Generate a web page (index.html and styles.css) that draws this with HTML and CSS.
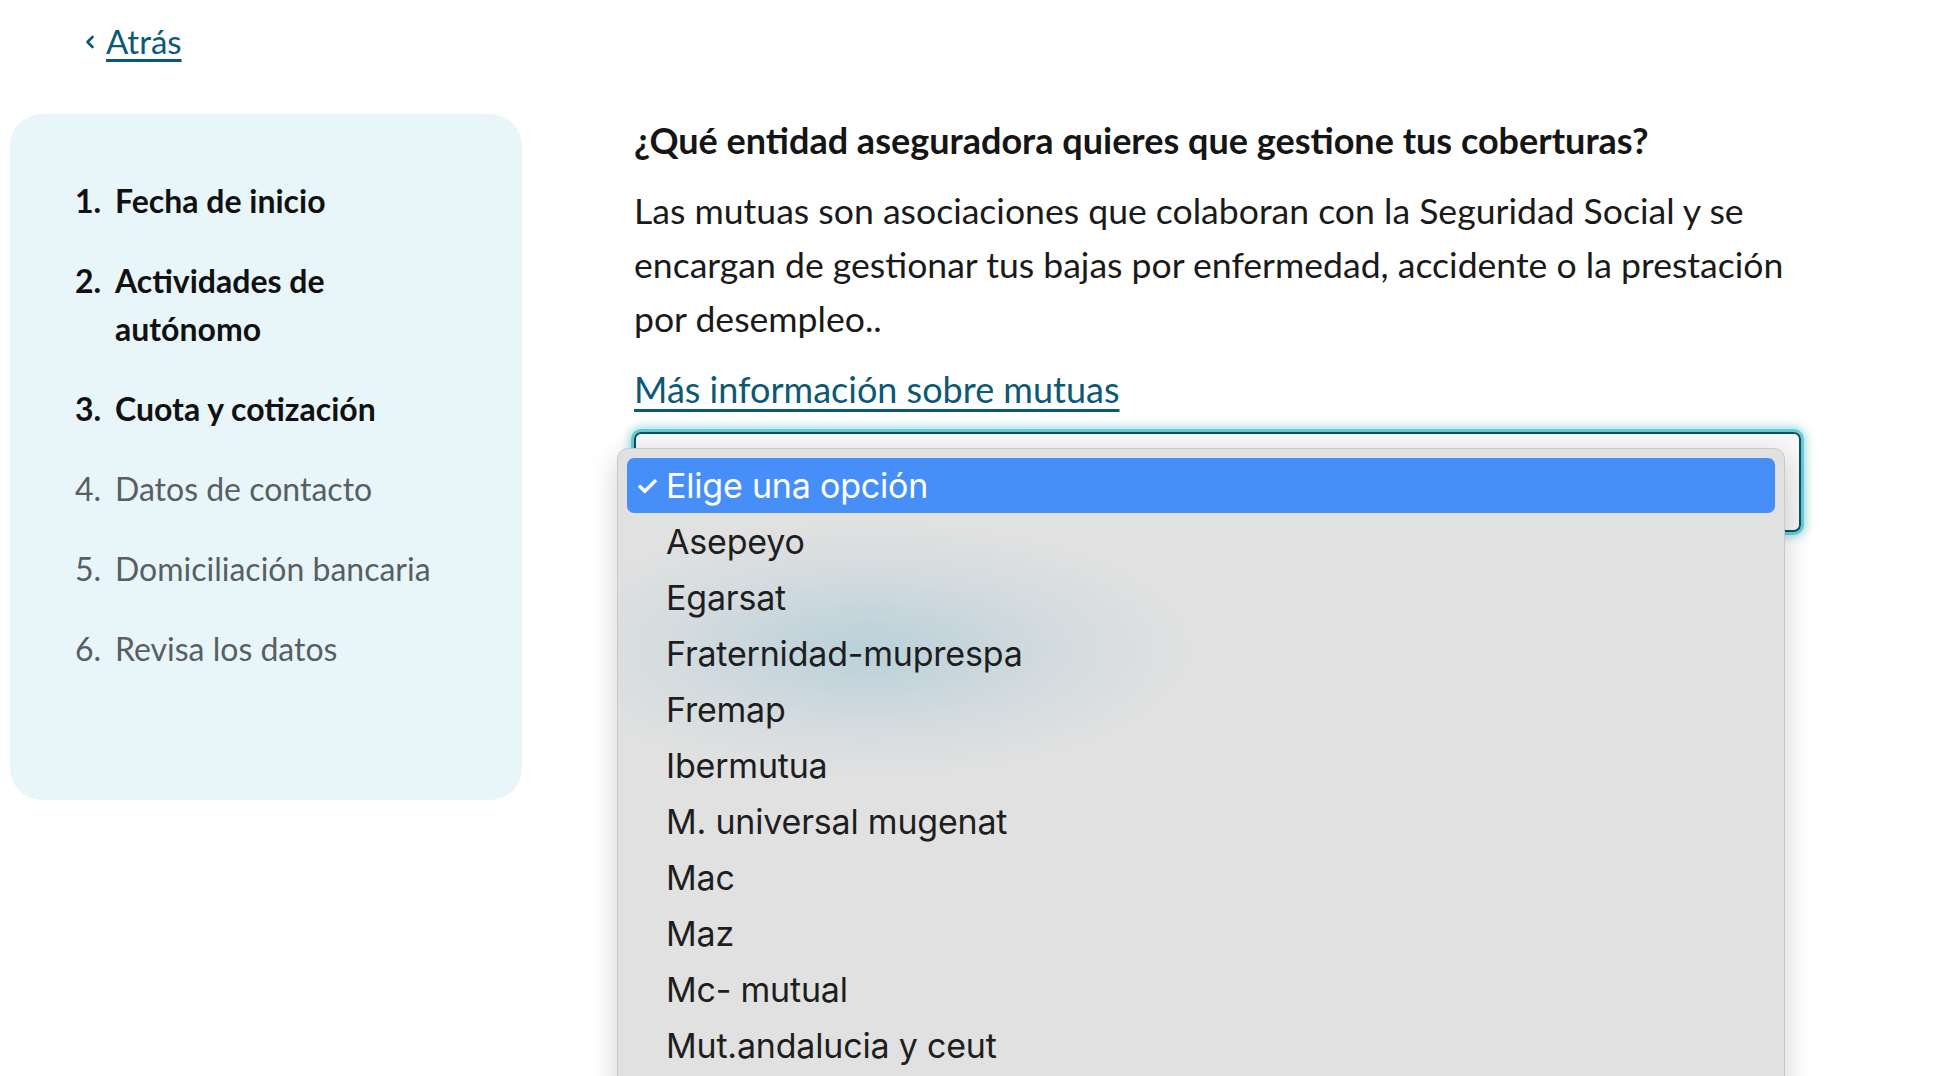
FILE: index.html
```html
<!DOCTYPE html>
<html lang="es">
<head>
<meta charset="utf-8">
<title>Entidad aseguradora</title>
<link rel="stylesheet" href="styles.css">
</head>
<body>
<div class="page">
  <nav class="back-row">
    <a class="back" href="#"><svg class="chev" width="12" height="16" viewBox="0 0 12 16" aria-hidden="true"><polyline points="8.5,3 3.5,8 8.5,13" fill="none" stroke="#0b5a75" stroke-width="2.6" stroke-linecap="round" stroke-linejoin="round"/></svg><span class="back-text">Atrás</span></a>
  </nav>
  <div class="layout">
    <aside class="sidebar">
      <ol class="steps">
        <li class="step done"><span class="num">1.</span><span class="label">Fecha de inicio</span></li>
        <li class="step done"><span class="num">2.</span><span class="label">Actividades de<br>autónomo</span></li>
        <li class="step done"><span class="num">3.</span><span class="label">Cuota y cotización</span></li>
        <li class="step"><span class="num">4.</span><span class="label">Datos de contacto</span></li>
        <li class="step"><span class="num">5.</span><span class="label">Domiciliación bancaria</span></li>
        <li class="step"><span class="num">6.</span><span class="label">Revisa los datos</span></li>
      </ol>
    </aside>
    <main class="main">
      <h1 class="question">¿Qué entidad aseguradora quieres que gestione tus coberturas?</h1>
      <p class="desc">Las mutuas son asociaciones que colaboran con la Seguridad Social y se encargan de gestionar tus bajas por enfermedad, accidente o la prestación por desempleo..</p>
      <a class="more" href="#">Más información sobre mutuas</a>
      <div class="select-wrap">
        <div class="select-box"></div>
        <div class="popup">
          <div class="blob"></div>
          <ul class="options">
            <li class="opt selected"><span class="check">✓</span>Elige una opción</li>
            <li class="opt">Asepeyo</li>
            <li class="opt">Egarsat</li>
            <li class="opt">Fraternidad-muprespa</li>
            <li class="opt">Fremap</li>
            <li class="opt">Ibermutua</li>
            <li class="opt">M. universal mugenat</li>
            <li class="opt">Mac</li>
            <li class="opt">Maz</li>
            <li class="opt">Mc- mutual</li>
            <li class="opt">Mut.andalucia y ceut</li>
          </ul>
        </div>
      </div>
    </main>
  </div>
</div>
</body>
</html>
```

FILE: styles.css
```css
html, body {
  margin: 0;
  padding: 0;
  height: 100%;
  overflow: hidden;
  background: #ffffff;
}
body {
  font-family: Lato, "Noto Sans", sans-serif;
  color: #151515;
}
.page {
  padding: 0 0 0 10px;
}
.back-row {
  height: 114px;
  padding-left: 74px;
  box-sizing: border-box;
  padding-top: 20px;
}
.back {
  display: inline-flex;
  align-items: center;
  color: #0b5a75;
  text-decoration: none;
  font-size: 33px;
  line-height: 42px;
}
.chev {
  margin-right: 10px;
  position: relative;
  top: 1px;
}
.back-text {
  text-decoration: underline;
  text-decoration-thickness: 3px;
  text-underline-offset: 5px;
}
.layout {
  display: flex;
  align-items: flex-start;
}
.sidebar {
  width: 512px;
  height: 686px;
  box-sizing: border-box;
  background: #e8f6fa;
  border-radius: 32px;
  padding: 63px 20px 0 65px;
  flex-shrink: 0;
}
.steps {
  list-style: none;
  margin: 0;
  padding: 0;
  display: flex;
  flex-direction: column;
  gap: 32px;
}
.step {
  display: flex;
  font-size: 32px;
  line-height: 48px;
  color: #595e62;
}
.step.done {
  font-weight: 700;
  color: #111111;
}
.num {
  width: 40px;
  flex-shrink: 0;
}
.main {
  margin-left: 112px;
  width: 1170px;
  padding-top: 6px;
}
.question {
  margin: 0;
  font-size: 36px;
  font-weight: 700;
  line-height: 40px;
  color: #151515;
}
.desc {
  margin: 24px 0 0 0;
  font-size: 35.6px;
  line-height: 54px;
  color: #1a1a1a;
  max-width: 1170px;
}
.more {
  display: inline-block;
  margin-top: 16px;
  font-size: 36px;
  line-height: 54px;
  color: #0b5a75;
  text-decoration: underline;
  text-decoration-thickness: 3px;
  text-underline-offset: 6px;
}
.select-wrap {
  position: relative;
  margin-top: 16px;
  width: 1167px;
}
.select-box {
  height: 100px;
  box-sizing: border-box;
  border: 2px solid #0a5266;
  border-radius: 7px;
  background: linear-gradient(#f9f9f9, #f4f4f4);
  box-shadow: 0 0 0 3px rgba(40, 180, 195, 0.55), 0 0 10px 5px rgba(40, 180, 195, 0.45);
}
.popup {
  position: absolute;
  left: -17px;
  top: 16px;
  width: 1168px;
  height: 700px;
  box-sizing: border-box;
  background: #e1e1e1;
  border: 1px solid #c9c9c9;
  border-radius: 11px;
  box-shadow: 0 8px 28px rgba(0, 0, 0, 0.18);
  padding: 9px 9px 0 9px;
  overflow: hidden;
  font-family: Inter, Roboto, "Noto Sans", sans-serif;
}
.blob {
  position: absolute;
  left: 0;
  top: 0;
  width: 760px;
  height: 440px;
  background: radial-gradient(ellipse 330px 130px at 250px 200px, rgba(172, 203, 215, 0.75), rgba(190, 210, 218, 0.35) 60%, rgba(225, 225, 225, 0) 100%);
  pointer-events: none;
}
.options {
  position: relative;
  list-style: none;
  margin: 0;
  padding: 0;
}
.opt {
  height: 56px;
  line-height: 56px;
  padding-left: 39px;
  font-size: 34px;
  color: #1e1e1e;
  position: relative;
  letter-spacing: -0.2px;
}
.opt.selected {
  height: 55px;
  line-height: 55px;
  margin-bottom: 1px;
  background: #468ff8;
  color: #ffffff;
  border-radius: 7px;
}
.check {
  position: absolute;
  left: 8px;
  top: 0;
  font-size: 27px;
  font-weight: 600;
}
```
